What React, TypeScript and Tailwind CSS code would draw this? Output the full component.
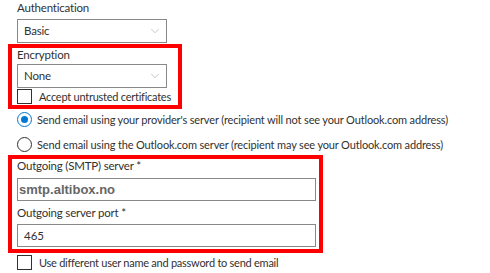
import { ChevronDown } from "lucide-react";

const font = { fontFamily: 'Lato, "Noto Sans", sans-serif' };

function Select({ value }: { value: string }) {
  return (
    <div className="flex h-[24px] w-[150px] items-center justify-between border border-[#8a8886] bg-white pl-[6px] pr-[4px] text-[11.5px] tracking-[-0.2px] text-[#323130]">
      <span>{value}</span>
      <ChevronDown size={14} strokeWidth={1} color="#a19f9d" />
    </div>
  );
}

function Checkbox({ label }: { label: string }) {
  return (
    <div className="flex items-center whitespace-nowrap">
      <div className="h-[15px] w-[15px] shrink-0 border border-[#323130] bg-white" />
      <span className="ml-[7px] text-[11px] leading-[15px] tracking-[-0.25px] text-[#323130]">{label}</span>
    </div>
  );
}

function Radio({ label, checked }: { label: string; checked?: boolean }) {
  return (
    <div className="flex items-center whitespace-nowrap">
      {checked ? (
        <div className="flex h-[15px] w-[15px] shrink-0 items-center justify-center rounded-full border border-[#0078d4] bg-white">
          <div className="h-[7px] w-[7px] rounded-full bg-[#0078d4]" />
        </div>
      ) : (
        <div className="h-[15px] w-[15px] shrink-0 rounded-full border border-[#323130] bg-white" />
      )}
      <span className="ml-[5px] text-[11px] leading-[15px] tracking-[-0.15px] text-[#323130]">{label}</span>
    </div>
  );
}

function TextInput({ value, big }: { value: string; big?: boolean }) {
  return (
    <div className="flex h-[23px] w-[299px] items-center border border-[#8a8886] bg-white">
      {big ? (
        <span
          className="pl-[1px] text-[13px] font-bold text-[#666666]"
          style={{ fontFamily: '"Liberation Sans", Arial, sans-serif' }}
        >
          {value}
        </span>
      ) : (
        <span className="pl-[6px] text-[11.5px] text-[#323130]">{value}</span>
      )}
    </div>
  );
}

export default function App() {
  return (
    <div className="h-[273px] w-[490px] overflow-hidden bg-white" style={font}>
      <div className="flex flex-col">
        <div className="ml-[17px] text-[11.5px] leading-[16px] tracking-[-0.2px] text-[#323130]">Authentication</div>
        <div className="ml-[17px] mt-[3px]">
          <Select value="Basic" />
        </div>

        <div className="ml-[8px] mt-[1px] w-[174px] border-4 border-[#ff0000] pl-[5px] pb-[1px]">
          <div className="text-[11.5px] leading-[14px] tracking-[-0.2px] text-[#323130]">Encryption</div>
          <div className="mt-[2px]">
            <Select value="None" />
          </div>
          <div className="mt-[1px]">
            <Checkbox label="Accept untrusted certificates" />
          </div>
        </div>

        <div className="ml-[17px] mt-[3px]">
          <Radio checked label="Send email using your provider's server (recipient will not see your Outlook.com address)" />
        </div>
        <div className="ml-[17px] mt-[10px]">
          <Radio label="Send email using the Outlook.com server (recipient may see your Outlook.com address)" />
        </div>

        <div className="ml-[8px] mt-[3px] w-[315px] border-4 border-[#ff0000] pl-[5px] pb-[2px]">
          <div className="text-[11.5px] leading-[14px] tracking-[-0.2px] text-[#323130]">Outgoing (SMTP) server *</div>
          <div className="mt-[5px]">
            <TextInput value="smtp.altibox.no" big />
          </div>
          <div className="mt-[5px] text-[11.5px] leading-[14px] tracking-[-0.2px] text-[#323130]">Outgoing server port *</div>
          <div className="mt-[4px]">
            <TextInput value="465" />
          </div>
        </div>

        <div className="ml-[17px] mt-[2px]">
          <Checkbox label="Use different user name and password to send email" />
        </div>
      </div>
    </div>
  );
}
